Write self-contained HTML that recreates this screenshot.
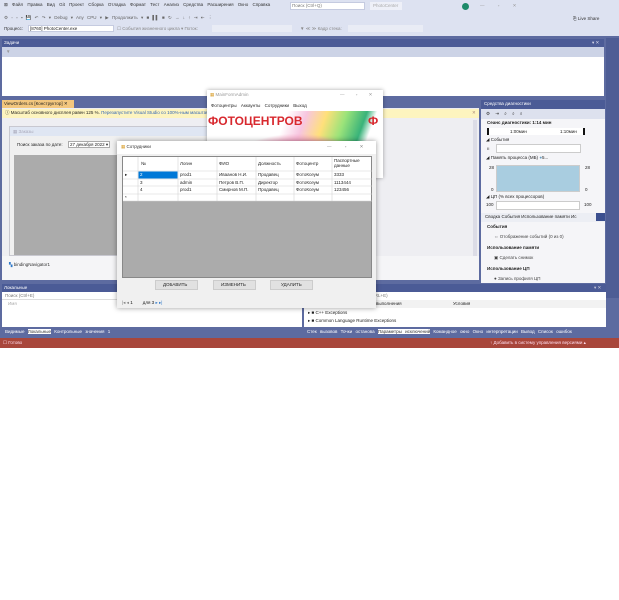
<!DOCTYPE html>
<html><head><meta charset="utf-8">
<style>
*{margin:0;padding:0;box-sizing:border-box}
body{width:619px;height:600px;background:#fff;position:relative;overflow:hidden;font-family:"Liberation Sans",sans-serif;font-size:5px;color:#1e1e1e}
.a{position:absolute;white-space:nowrap}
.t{font-size:4.5px;line-height:1}
</style></head><body>
<!-- VS frame -->
<div class="a" style="left:0;top:0;width:619px;height:348px;background:#5d6ba0"></div>
<div class="a" style="left:0;top:0;width:619px;height:36px;background:#dde2f1"></div>
<div class="a t" style="left:4px;top:3px;color:#333;word-spacing:3px">⊠ Файл Правка Вид Git Проект Сборка Отладка Формат Тест Анализ Средства Расширения Окно Справка</div>
<div class="a" style="left:290px;top:2px;width:75px;height:8px;background:#fff;border:1px solid #c5cbe0"></div>
<div class="a t" style="left:292px;top:4px;color:#777">Поиск (Ctrl+Q)</div>
<div class="a" style="left:370px;top:2px;width:32px;height:8px;background:#eef0f8"></div>
<div class="a t" style="left:373px;top:4px;color:#aaa">PhotoCenter</div>
<div class="a" style="left:462px;top:3px;width:7px;height:7px;border-radius:50%;background:#1d8a6a"></div>
<div class="a t" style="left:480px;top:4px;color:#999;word-spacing:12px">— ▫ ✕</div>
<div class="a t" style="left:4px;top:16px;color:#666;word-spacing:2px">⚙ ◦ ▫ ▪ 💾 ↶ ↷ ▾ Debug ▾ Any CPU ▾ ▶ Продолжить ▾ ■ ▌▌ ■ ↻ → ↓ ↑ ⇥ ⇤ ⋮</div>
<div class="a t" style="left:573px;top:17px;color:#333">⎘ Live Share</div>
<div class="a t" style="left:4px;top:27px;color:#333">Процесс:</div>
<div class="a" style="left:28px;top:25px;width:86px;height:7px;background:#fff;border:1px solid #c5cbe0"></div>
<div class="a t" style="left:30px;top:27px">[8760] PhotoCenter.exe</div>
<div class="a t" style="left:117px;top:27px;color:#888">☐ События жизненного цикла ▾ Поток:</div>
<div class="a" style="left:212px;top:25px;width:80px;height:7px;background:#e9ecf5"></div>
<div class="a t" style="left:300px;top:27px;color:#888">▼ ≪ ≫ Кадр стека:</div>
<div class="a" style="left:348px;top:25px;width:75px;height:7px;background:#e9ecf5"></div>
<!-- tasks panel -->
<div class="a" style="left:2px;top:39px;width:602px;height:8px;background:#4b5b96"></div>
<div class="a t" style="left:4px;top:41px;color:#fff">Задачи</div>
<div class="a t" style="left:592px;top:41px;color:#dde">▾ ✕</div>
<div class="a" style="left:2px;top:47px;width:602px;height:10px;background:#ccd3e6"></div>
<div class="a t" style="left:6px;top:50px;color:#999">▼</div>
<div class="a" style="left:2px;top:57px;width:602px;height:39px;background:#fff"></div>
<div class="a" style="left:606px;top:38px;width:13px;height:260px;background:#4e5d95"></div>
<!-- designer doc -->
<div class="a" style="left:2px;top:100px;width:72px;height:8px;background:#f3c77e"></div>
<div class="a t" style="left:4px;top:102px">ViewOrders.cs [Конструктор] ✕</div>
<div class="a" style="left:2px;top:108px;width:477px;height:172px;background:#eeeef2"></div>
<div class="a" style="left:2px;top:109px;width:477px;height:9px;background:#fdf4bf"></div>
<div class="a t" style="left:5px;top:111px;color:#1e1e1e">ⓘ Масштаб основного дисплея равен 125 %. <span style="color:#3467b5">Перезапустите Visual Studio со 100%-ным масштабом</span></div>
<div class="a t" style="left:472px;top:111px;color:#a87">✕</div>
<div class="a" style="left:473px;top:120px;width:4px;height:150px;background:#dcdce6"></div>
<div class="a" style="left:9px;top:126px;width:220px;height:130px;background:#f0f0f0;border:1px solid #c8c8d0"></div>
<div class="a" style="left:10px;top:127px;width:218px;height:9px;background:#dfe6f3"></div>
<div class="a t" style="left:13px;top:130px;color:#aab">▦ Заказы</div>
<div class="a t" style="left:17px;top:143px">Поиск заказа по дате:</div>
<div class="a" style="left:68px;top:141px;width:42px;height:7px;background:#fff;border:1px solid #aaa"></div>
<div class="a t" style="left:70px;top:143px">27 декабря 2022 ▾</div>
<div class="a" style="left:14px;top:155px;width:110px;height:100px;background:#ababab"></div>
<div class="a" style="left:2px;top:256px;width:477px;height:24px;background:#f5f5f7"></div>
<div class="a t" style="left:9px;top:263px;color:#333"><span style="color:#2f78c8">▚</span> bindingNavigator1</div>
<!-- diagnostics -->
<div class="a" style="left:481px;top:100px;width:124px;height:9px;background:#4b5b96"></div>
<div class="a t" style="left:484px;top:102px;color:#fff">Средства диагностики</div>
<div class="a" style="left:481px;top:109px;width:124px;height:174px;background:#f5f5f8"></div>
<div class="a" style="left:481px;top:109px;width:124px;height:10px;background:#dde1ee"></div>
<div class="a t" style="left:486px;top:112px;color:#333;word-spacing:4px">⚙ ⇥ ⌕ ⌕ ⌕</div>
<div class="a t" style="left:487px;top:121px;font-weight:bold">Сеанс диагностики: 1:14 мин</div>
<div class="a" style="left:487px;top:128px;width:98px;height:7px;background:#fff;border-left:2px solid #111;border-right:2px solid #111"></div>
<div class="a t" style="left:510px;top:130px">1:00мин</div><div class="a t" style="left:560px;top:130px">1:10мин</div>
<div class="a t" style="left:486px;top:138px">◢ События</div>
<div class="a" style="left:496px;top:144px;width:85px;height:9px;background:#fff;border:1px solid #ccc"></div>
<div class="a t" style="left:487px;top:147px">ıı</div>
<div class="a t" style="left:486px;top:156px">◢ Память процесса (МБ) <span style="color:#6a9ec0">●</span>5...</div>
<div class="a" style="left:496px;top:165px;width:84px;height:27px;background:#a9cde0;border:1px solid #ccc"></div>
<div class="a t" style="left:489px;top:166px">28</div><div class="a t" style="left:585px;top:166px">28</div>
<div class="a t" style="left:491px;top:188px">0</div><div class="a t" style="left:585px;top:188px">0</div>
<div class="a t" style="left:486px;top:195px">◢ ЦП (% всех процессоров)</div>
<div class="a" style="left:496px;top:201px;width:84px;height:9px;background:#fff;border:1px solid #ccc"></div>
<div class="a t" style="left:486px;top:203px">100</div><div class="a t" style="left:584px;top:203px">100</div>
<div class="a" style="left:481px;top:213px;width:124px;height:9px;background:#eceef4"></div>
<div class="a t" style="left:485px;top:215px">Сводка  События  Использование памяти  Ис</div>
<div class="a" style="left:596px;top:213px;width:9px;height:8px;background:#3b4f8f"></div>
<div class="a t" style="left:487px;top:225px;font-weight:bold">События</div>
<div class="a t" style="left:494px;top:235px;color:#444">⇔ Отображение событий (0 из 0)</div>
<div class="a t" style="left:487px;top:246px;font-weight:bold">Использование памяти</div>
<div class="a t" style="left:494px;top:256px;color:#444">▣ Сделать снимок</div>
<div class="a t" style="left:487px;top:267px;font-weight:bold">Использование ЦП</div>
<div class="a t" style="left:494px;top:277px;color:#444">● Запись профиля ЦП</div>
<!-- locals -->
<div class="a" style="left:2px;top:284px;width:300px;height:8px;background:#4b5b96"></div>
<div class="a t" style="left:4px;top:286px;color:#fff">Локальные</div>
<div class="a" style="left:2px;top:292px;width:300px;height:8px;background:#fff;border-bottom:1px solid #ddd"></div>
<div class="a t" style="left:5px;top:294px;color:#777">Поиск (Ctrl+E)</div>
<div class="a" style="left:2px;top:300px;width:300px;height:27px;background:#fff"></div>
<div class="a t" style="left:8px;top:302px;color:#aaa">Имя</div>
<div class="a t" style="left:5px;top:330px;color:#fff;word-spacing:2px">Видимые <span style="background:#fff;color:#333">Локальные</span> Контрольные значения 1</div>
<!-- exceptions -->
<div class="a" style="left:304px;top:284px;width:302px;height:8px;background:#4b5b96"></div>
<div class="a t" style="left:594px;top:286px;color:#ccd">▾ ✕</div>
<div class="a" style="left:304px;top:292px;width:302px;height:35px;background:#fff"></div>
<div class="a t" style="left:372px;top:294px;color:#777">TRL+E)</div>
<div class="a" style="left:304px;top:300px;width:302px;height:8px;background:#f2f2f2"></div>
<div class="a t" style="left:376px;top:302px">выполнения</div><div class="a t" style="left:453px;top:302px">Условия</div>
<div class="a t" style="left:308px;top:311px">▸ ■ C++ Exceptions</div>
<div class="a t" style="left:308px;top:319px">▸ ■ Common Language Runtime Exceptions</div>
<div class="a t" style="left:307px;top:330px;color:#fff;word-spacing:2px">Стек вызовов Точки останова <span style="background:#fff;color:#333">Параметры исключений</span> Командное окно Окно интерпретации Вывод Список ошибок</div>
<!-- status -->
<div class="a" style="left:0;top:338px;width:619px;height:10px;background:#a8463b"></div>
<div class="a t" style="left:3px;top:341px;color:#fde">☐ Готово</div>
<div class="a t" style="left:490px;top:341px;color:#fde">↑ Добавить в систему управления версиями ▴</div>
<!-- MainFormAdmin -->
<div class="a" style="left:207px;top:90px;width:176px;height:88px;background:#fff;box-shadow:0 0 4px rgba(0,0,0,.35)"></div>
<div class="a t" style="left:210px;top:93px;color:#999"><span style="color:#d9a030">▦</span> MainFormAdmin</div>
<div class="a t" style="left:340px;top:93px;color:#999;word-spacing:10px">— ▫ ✕</div>
<div class="a t" style="left:211px;top:104px;word-spacing:3px">Фотоцентры Аккаунты Сотрудники Выход</div>
<div class="a" style="left:208px;top:111px;width:175px;height:67px;background:linear-gradient(110deg,#fff 0%,#fff 40%,#f7c6e0 50%,#ffe07a 60%,#9be37a 70%,#39b37a 80%,#fff 85%)"></div>
<div class="a" style="left:208px;top:111px;width:110px;height:20px;font-size:12px;font-weight:bold;color:#d8282e;line-height:20px">ФОТОЦЕНТРОВ</div>
<div class="a" style="left:368px;top:111px;font-size:12px;font-weight:bold;color:#d8282e;line-height:20px">Ф</div>
<div class="a" style="left:218px;top:133px;width:160px;height:45px;background:radial-gradient(ellipse at 50% 100%,#333 0%,#c03090 35%,#f5a0c0 55%,transparent 70%)"></div>
<!-- Сотрудники -->
<div class="a" style="left:117px;top:141px;width:259px;height:167px;background:#f0f0f0;box-shadow:0 0 5px rgba(0,0,0,.4)"></div>
<div class="a" style="left:117px;top:141px;width:259px;height:13px;background:#fff"></div>
<div class="a t" style="left:121px;top:145px;color:#333"><span style="color:#d9a030">▦</span> Сотрудники</div>
<div class="a t" style="left:327px;top:145px;color:#888;word-spacing:12px">— ▫ ✕</div>
<div class="a" style="left:122px;top:156px;width:250px;height:122px;background:#ababab;border:1px solid #888"></div>
<div class="a" style="left:123px;top:157px;width:248px;height:44px;background:#fff"></div>
<svg class="a" style="left:123px;top:157px" width="249" height="45">
<g stroke="#d4d4d4" stroke-width="0.6">
<line x1="15" y1="0" x2="15" y2="44"/><line x1="55" y1="0" x2="55" y2="44"/><line x1="94" y1="0" x2="94" y2="44"/><line x1="133" y1="0" x2="133" y2="44"/><line x1="171" y1="0" x2="171" y2="44"/><line x1="209" y1="0" x2="209" y2="44"/>
<line x1="0" y1="14" x2="249" y2="14"/><line x1="0" y1="22" x2="249" y2="22"/><line x1="0" y1="29" x2="249" y2="29"/><line x1="0" y1="37" x2="249" y2="37"/><line x1="0" y1="44" x2="249" y2="44"/>
</g>
<rect x="15.5" y="14.5" width="39" height="7" fill="#0078d7"/>
</svg>
<div class="a t" style="left:141px;top:162px">№</div><div class="a t" style="left:180px;top:162px">Логин</div><div class="a t" style="left:219px;top:162px">ФИО</div><div class="a t" style="left:258px;top:162px">Должность</div><div class="a t" style="left:296px;top:162px">Фотоцентр</div><div class="a t" style="left:334px;top:158px;line-height:1.2">Паспортные<br>данные</div>
<div class="a t" style="left:125px;top:173px">▸</div>
<div class="a t" style="left:140px;top:173px;color:#fff">2</div><div class="a t" style="left:180px;top:173px">prod1</div><div class="a t" style="left:219px;top:173px">Иваанов Н.И.</div><div class="a t" style="left:258px;top:173px">Продавец</div><div class="a t" style="left:296px;top:173px">ФотоКсеум</div><div class="a t" style="left:334px;top:173px">3333</div>
<div class="a t" style="left:140px;top:181px">3</div><div class="a t" style="left:180px;top:181px">admin</div><div class="a t" style="left:219px;top:181px">Петров В.П.</div><div class="a t" style="left:258px;top:181px">Директор</div><div class="a t" style="left:296px;top:181px">ФотоКсеум</div><div class="a t" style="left:334px;top:181px">1113444</div>
<div class="a t" style="left:140px;top:188px">4</div><div class="a t" style="left:180px;top:188px">prod1</div><div class="a t" style="left:219px;top:188px">Смирнов М.П.</div><div class="a t" style="left:258px;top:188px">Продавец</div><div class="a t" style="left:296px;top:188px">ФотоКсеум</div><div class="a t" style="left:334px;top:188px">123456</div>
<div class="a t" style="left:125px;top:196px">*</div>
<div class="a" style="left:155px;top:280px;width:43px;height:10px;background:#e1e1e1;border:1px solid #ccc"></div>
<div class="a t" style="left:163px;top:283px">ДОБАВИТЬ</div>
<div class="a" style="left:213px;top:280px;width:43px;height:10px;background:#e1e1e1;border:1px solid #ccc"></div>
<div class="a t" style="left:221px;top:283px">ИЗМЕНИТЬ</div>
<div class="a" style="left:270px;top:280px;width:43px;height:10px;background:#e1e1e1;border:1px solid #ccc"></div>
<div class="a t" style="left:281px;top:283px">УДАЛИТЬ</div>
<div class="a t" style="left:122px;top:301px;color:#777">|◂ ◂ <span style="color:#111">1</span>&nbsp;&nbsp;&nbsp;&nbsp;&nbsp;&nbsp;&nbsp;&nbsp;<span style="color:#111">для 3</span> <span style="color:#2f78c8">▸ ▸|</span></div>
</body></html>
